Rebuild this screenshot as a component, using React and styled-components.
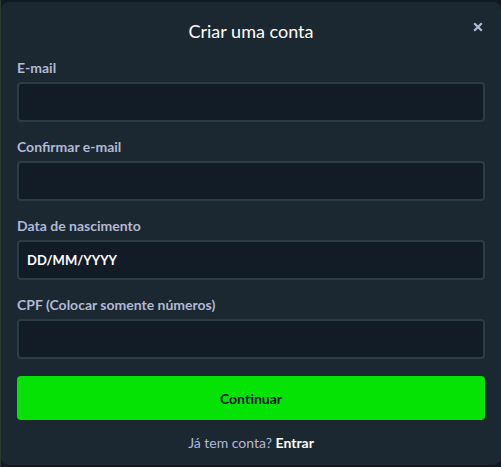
import React from "react";
import styled, { createGlobalStyle } from "styled-components";

const Global = createGlobalStyle`
  html, body { margin: 0; padding: 0; background: #111a22; }
  body { font-family: "Lato", "Noto Sans", sans-serif; }
  * { box-sizing: border-box; }
`;

const Page = styled.div`
  width: 501px;
  height: 467px;
  padding: 2px 0 2px 0;
  background: #111a22;
  border-left: 1px solid #2a3a30;
`;

const Modal = styled.div`
  position: relative;
  height: 463px;
  background: #1b2731;
  border-radius: 8px;
  padding: 0 16px;
  display: flex;
  flex-direction: column;
`;

const Header = styled.div`
  height: 58px;
  display: flex;
  align-items: center;
  justify-content: center;
`;

const Title = styled.h1`
  margin: 0;
  font-size: 18px;
  font-weight: 400;
  color: #ffffff;
  line-height: 20px;
`;

const Close = styled.button`
  position: absolute;
  top: 19px;
  right: 17px;
  width: 12px;
  height: 12px;
  padding: 0;
  border: 0;
  background: none;
  display: flex;
  align-items: center;
  justify-content: center;
  cursor: pointer;
`;

const Form = styled.form`
  display: flex;
  flex-direction: column;
  gap: 17px;
`;

const Field = styled.label`
  display: flex;
  flex-direction: column;
  gap: 6px;
`;

const Label = styled.span`
  font-size: 14px;
  font-weight: 700;
  line-height: 16px;
  color: #b1bad3;
`;

const Input = styled.input`
  height: 40px;
  width: 100%;
  background: #121c27;
  border: 2px solid #2b3c47;
  border-radius: 4px;
  padding: 0 8px;
  font-family: inherit;
  font-size: 13px;
  font-weight: 700;
  color: #ffffff;
  outline: none;
  &::placeholder { color: #ffffff; opacity: 1; }
`;

const Submit = styled.button`
  height: 44px;
  border: 0;
  border-radius: 4px;
  background: #05e305;
  color: #071824;
  font-family: inherit;
  font-size: 14px;
  font-weight: 700;
  cursor: pointer;
`;

const Footer = styled.p`
  margin: 15px 0 0;
  text-align: center;
  font-size: 14px;
  line-height: 16px;
  color: #b1bad3;
`;

const Link = styled.a`
  color: #ffffff;
  font-weight: 700;
  text-decoration: none;
`;

export default function App() {
  return (
    <>
      <Global />
      <Page>
        <Modal>
          <Header>
            <Title>Criar uma conta</Title>
          </Header>
          <Close aria-label="Fechar">
            <svg width="10" height="10" viewBox="0 0 10 10">
              <path d="M1.2 1.2 L8.8 8.8 M8.8 1.2 L1.2 8.8" stroke="#b1bad3" strokeWidth="2.2" />
            </svg>
          </Close>
          <Form onSubmit={(e) => e.preventDefault()}>
            <Field>
              <Label>E-mail</Label>
              <Input type="email" />
            </Field>
            <Field>
              <Label>Confirmar e-mail</Label>
              <Input type="email" />
            </Field>
            <Field>
              <Label>Data de nascimento</Label>
              <Input placeholder="DD/MM/YYYY" />
            </Field>
            <Field>
              <Label>CPF (Colocar somente números)</Label>
              <Input />
            </Field>
            <Submit type="submit">Continuar</Submit>
          </Form>
          <Footer>
            Já tem conta? <Link href="#">Entrar</Link>
          </Footer>
        </Modal>
      </Page>
    </>
  );
}
